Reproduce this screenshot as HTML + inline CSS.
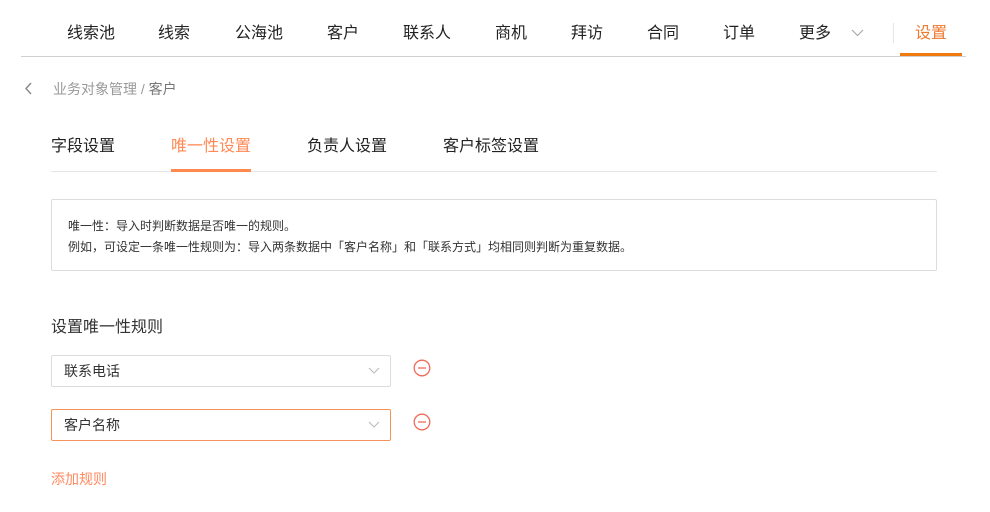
<!DOCTYPE html>
<html><head><meta charset="utf-8"><style>
*{margin:0;padding:0;box-sizing:border-box}
body{width:990px;height:512px;background:#fff;font-family:"Liberation Sans","Noto Sans CJK SC",sans-serif;color:#333;position:relative;overflow:hidden}
.a{position:absolute;white-space:nowrap}
.nav{font-size:16px;top:19px;color:#222}
.sel{position:absolute;left:51px;width:340px;height:32px;border:1px solid #dcdcdc;border-radius:2px;font-size:14px;padding-left:12px;line-height:30px;color:#333}
.sel svg{position:absolute;right:10px;top:11px}
.minus{position:absolute;left:413px}
</style></head><body>
<div class="a nav" style="left:67px">线索池</div>
<div class="a nav" style="left:158px">线索</div>
<div class="a nav" style="left:235px">公海池</div>
<div class="a nav" style="left:327px">客户</div>
<div class="a nav" style="left:403px">联系人</div>
<div class="a nav" style="left:495px">商机</div>
<div class="a nav" style="left:571px">拜访</div>
<div class="a nav" style="left:647px">合同</div>
<div class="a nav" style="left:723px">订单</div>
<div class="a nav" style="left:799px">更多</div>
<svg class="a" style="left:851px;top:29px" width="13" height="8"><path d="M1 1L6.5 6.5L12 1" fill="none" stroke="#aaa" stroke-width="1.2"/></svg>
<div class="a" style="left:893px;top:23px;width:1px;height:20px;background:#e5e5e5"></div>
<div class="a nav" style="left:915px;color:#f07a30">设置</div>
<div class="a" style="left:21px;top:56px;width:945px;height:1px;background:#d0d0d0"></div>
<div class="a" style="left:900px;top:53px;width:62px;height:3px;background:#f07a10"></div>

<svg class="a" style="left:24px;top:82px" width="9" height="13"><path d="M7 1L2 6.5L7 12" fill="none" stroke="#888" stroke-width="1.4"/></svg>
<div class="a" style="left:53px;top:79px;font-size:14px;color:#999">业务对象管理 / <span style="color:#777">客户</span></div>

<div class="a" style="left:51px;top:132px;font-size:16px;color:#222">字段设置</div>
<div class="a" style="left:171px;top:132px;font-size:16px;color:#ff8a55">唯一性设置</div>
<div class="a" style="left:307px;top:132px;font-size:16px;color:#222">负责人设置</div>
<div class="a" style="left:443px;top:132px;font-size:16px;color:#222">客户标签设置</div>
<div class="a" style="left:51px;top:171px;width:886px;height:1px;background:#e5e5e5"></div>
<div class="a" style="left:171px;top:169px;width:80px;height:3px;background:#ff8a50"></div>

<div class="a" style="left:51px;top:199px;width:886px;height:72px;border:1px solid #dcdcdc;border-radius:2px"></div>
<div class="a" style="left:68px;top:217px;font-size:12px;color:#333">唯一性：导入时判断数据是否唯一的规则。</div>
<div class="a" style="left:68px;top:238px;font-size:12px;color:#333">例如，可设定一条唯一性规则为：导入两条数据中「客户名称」和「联系方式」均相同则判断为重复数据。</div>

<div class="a" style="left:51px;top:313px;font-size:16px;color:#333">设置唯一性规则</div>
<div class="sel" style="top:355px">联系电话<svg width="12" height="8"><path d="M1 1L6 6L11 1" fill="none" stroke="#bbb" stroke-width="1.1"/></svg></div>
<div class="sel" style="top:409px;border-color:#f5915a">客户名称<svg width="12" height="8"><path d="M1 1L6 6L11 1" fill="none" stroke="#bbb" stroke-width="1.1"/></svg></div>
<svg class="minus" style="top:359px" width="18" height="18"><circle cx="9" cy="9" r="7.8" fill="none" stroke="#f06a5a" stroke-width="1.3"/><path d="M5 9H13" stroke="#f06a5a" stroke-width="1.3"/></svg>
<svg class="minus" style="top:413px" width="18" height="18"><circle cx="9" cy="9" r="7.8" fill="none" stroke="#f06a5a" stroke-width="1.3"/><path d="M5 9H13" stroke="#f06a5a" stroke-width="1.3"/></svg>

<div class="a" style="left:51px;top:469px;font-size:14px;color:#ff8a60">添加规则</div>
</body></html>
